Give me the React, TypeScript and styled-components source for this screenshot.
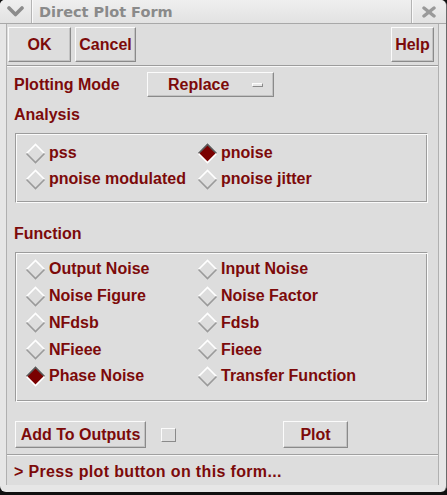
import React from "react";
import styled, { createGlobalStyle } from "styled-components";

const RED = "#7c0a0a";
const BG = "#dddddd";

const GlobalStyle = createGlobalStyle`
  html, body { margin: 0; padding: 0; background: #101010; }
  body { width: 447px; height: 495px; overflow: hidden; }
  #root { width: 447px; height: 495px; }
`;

const Window = styled.div`
  width: 447px;
  height: 492px;
  background: #e6e6e6;
  border-radius: 5px 6px 6px 6px;
  display: flex;
  flex-direction: column;
  overflow: hidden;
  box-sizing: border-box;
  border-right: 1px solid #6a6a6a;
`;

const TitleBar = styled.div`
  height: 23px;
  display: flex;
  align-items: stretch;
  background: linear-gradient(#efefef, #e2e2e2);
  border-bottom: 1px solid #a8a8a8;
  flex: none;
`;

const TitleCell = styled.div<{ $w: number; $side: "left" | "right" }>`
  width: ${(p) => p.$w}px;
  display: flex;
  align-items: center;
  justify-content: center;
  flex: none;
  ${(p) =>
    p.$side === "left"
      ? "border-right: 1px solid #b4b4b4; box-shadow: 1px 0 0 #fafafa;"
      : "border-left: 1px solid #b4b4b4; box-shadow: inset 1px 0 0 #fafafa;"}
`;

const TitleText = styled.div`
  flex: 1;
  font-family: "DejaVu Sans", sans-serif;
  font-weight: bold;
  font-size: 14.5px;
  color: #8a8a8a;
  padding-left: 7px;
  display: flex;
  align-items: center;
  white-space: nowrap;
`;

const Frame = styled.div`
  flex: 1;
  display: flex;
  padding: 0 7px 7px 6px;
  min-height: 0;
`;

const Client = styled.div`
  flex: 1;
  display: flex;
  flex-direction: column;
  background: ${BG};
  border-left: 1px solid #b0b0b0;
  border-right: 1px solid #b0b0b0;
  font-family: "Liberation Sans", Arial, sans-serif;
  font-weight: bold;
  font-size: 16px;
  color: ${RED};
`;

const ButtonBar = styled.div`
  display: flex;
  gap: 4px;
  padding: 3px 4px 3px 1px;
  border-bottom: 1px solid #9c9c9c;
  box-shadow: 0 1px 0 #f8f8f8;
`;

const Button = styled.div<{ $w: number; $h: number }>`
  width: ${(p) => p.$w}px;
  height: ${(p) => p.$h}px;
  box-sizing: border-box;
  display: flex;
  align-items: center;
  justify-content: center;
  background: ${BG};
  border: 1px solid;
  border-color: #fbfbfb #8a8a8a #8a8a8a #fbfbfb;
  box-shadow: inset -1px -1px 0 #c2c2c2;
  white-space: nowrap;
  flex: none;
`;

const Spacer = styled.div`
  flex: 1;
`;

const FormBody = styled.div`
  display: flex;
  flex-direction: column;
  padding: 6px 10px 0 7px;
`;

const ModeRow = styled.div`
  display: flex;
  align-items: center;
  height: 25px;
`;

const ModeLabel = styled.div`
  width: 133px;
  flex: none;
`;

const OptionButton = styled(Button)`
  justify-content: flex-start;
  padding-left: 20px;
`;

const OptionIndicator = styled.div`
  width: 11px;
  height: 4px;
  box-sizing: border-box;
  margin-left: 23px;
  background: #e8e8e8;
  border: 1px solid;
  border-color: #fdfdfd #8a8a8a #8a8a8a #fdfdfd;
`;

const SectionLabel = styled.div<{ $top: number }>`
  height: 20px;
  line-height: 20px;
  margin-top: ${(p) => p.$top}px;
`;

const GroupBox = styled.div<{ $top: number; $h: number; $pt: number; $row: number }>`
  margin: ${(p) => p.$top}px 0 0 1px;
  height: ${(p) => p.$h}px;
  box-sizing: border-box;
  border: 1px solid;
  border-color: #9c9c9c #fbfbfb #fbfbfb #9c9c9c;
  box-shadow: inset 1px 1px 0 #fbfbfb, inset -1px -1px 0 #9c9c9c;
  padding: ${(p) => p.$pt}px 0 0 9px;
  display: grid;
  grid-template-columns: 172px 1fr;
  grid-auto-rows: ${(p) => p.$row}px;
`;

const RadioItem = styled.div`
  display: flex;
  align-items: center;
  gap: 3px;
  white-space: nowrap;
`;

const DiamondSvg = styled.svg`
  flex: none;
  display: block;
`;

const Diamond = ({ on }: { on?: boolean }) => (
  <DiamondSvg width="21" height="21" viewBox="0 0 21 21">
    <polygon
      points="10.5,1.5 19.5,10.5 10.5,19.5 1.5,10.5"
      fill={on ? "#7a0000" : BG}
    />
    <polyline
      points="1.5,10.5 10.5,1.5 19.5,10.5"
      fill="none"
      stroke={on ? "#5a5a5a" : "#ffffff"}
      strokeWidth="1.6"
    />
    <polyline
      points="1.5,10.5 10.5,19.5 19.5,10.5"
      fill="none"
      stroke={on ? "#ffffff" : "#9a9a9a"}
      strokeWidth="1.6"
    />
  </DiamondSvg>
);

const Radio = ({ label, on }: { label: string; on?: boolean }) => (
  <RadioItem>
    <Diamond on={on} />
    <span>{label}</span>
  </RadioItem>
);

const BottomRow = styled.div`
  display: flex;
  align-items: center;
  padding: 19px 0 0 8px;
  height: 27px;
  box-sizing: content-box;
`;

const CheckBox = styled.div`
  width: 15px;
  height: 14px;
  box-sizing: border-box;
  margin: 0 107px 0 15px;
  background: ${BG};
  border: 1px solid;
  border-color: #fbfbfb #8a8a8a #8a8a8a #fbfbfb;
  flex: none;
`;

const Separator = styled.div`
  margin-top: 6px;
  height: 1px;
  background: #a0a0a0;
  box-shadow: 0 1px 0 #f6f6f6;
`;

const Status = styled.div`
  flex: 1;
  display: flex;
  align-items: center;
  padding: 3px 0 0 7px;
  white-space: nowrap;
  letter-spacing: 0.35px;
`;

const Chevron = () => (
  <svg width="17" height="11" viewBox="0 0 17 11">
    <polyline
      points="2,2 8.5,8.5 15,2"
      fill="none"
      stroke="#8c8c8c"
      strokeWidth="3.6"
      strokeLinecap="round"
      strokeLinejoin="round"
    />
  </svg>
);

const CloseX = () => (
  <svg width="14" height="12" viewBox="0 0 14 12">
    <g stroke="#9a9a9a" strokeWidth="3.4" strokeLinecap="round">
      <line x1="2" y1="2" x2="12" y2="10" />
      <line x1="12" y1="2" x2="2" y2="10" />
    </g>
  </svg>
);

export default function App() {
  return (
    <>
      <GlobalStyle />
      <Window>
        <TitleBar>
          <TitleCell $w={31} $side="left">
            <Chevron />
          </TitleCell>
          <TitleText>Direct Plot Form</TitleText>
          <TitleCell $w={34} $side="right">
            <CloseX />
          </TitleCell>
        </TitleBar>
        <Frame>
          <Client>
            <ButtonBar>
              <Button $w={63} $h={35}>OK</Button>
              <Button $w={61} $h={35}>Cancel</Button>
              <Spacer />
              <Button $w={43} $h={35}>Help</Button>
            </ButtonBar>
            <FormBody>
              <ModeRow>
                <ModeLabel>Plotting Mode</ModeLabel>
                <OptionButton $w={127} $h={25}>
                  Replace
                  <OptionIndicator />
                </OptionButton>
              </ModeRow>
              <SectionLabel $top={8}>Analysis</SectionLabel>
              <GroupBox $top={8} $h={70} $pt={6} $row={26}>
                <Radio label="pss" />
                <Radio label="pnoise" on />
                <Radio label="pnoise modulated" />
                <Radio label="pnoise jitter" />
              </GroupBox>
              <SectionLabel $top={21}>Function</SectionLabel>
              <GroupBox $top={8} $h={150} $pt={3} $row={26.75}>
                <Radio label="Output Noise" />
                <Radio label="Input Noise" />
                <Radio label="Noise Figure" />
                <Radio label="Noise Factor" />
                <Radio label="NFdsb" />
                <Radio label="Fdsb" />
                <Radio label="NFieee" />
                <Radio label="Fieee" />
                <Radio label="Phase Noise" on />
                <Radio label="Transfer Function" />
              </GroupBox>
            </FormBody>
            <BottomRow>
              <Button $w={131} $h={27}>Add To Outputs</Button>
              <CheckBox />
              <Button $w={65} $h={27}>Plot</Button>
            </BottomRow>
            <Separator />
            <Status>&gt; Press plot button on this form...</Status>
          </Client>
        </Frame>
      </Window>
    </>
  );
}
